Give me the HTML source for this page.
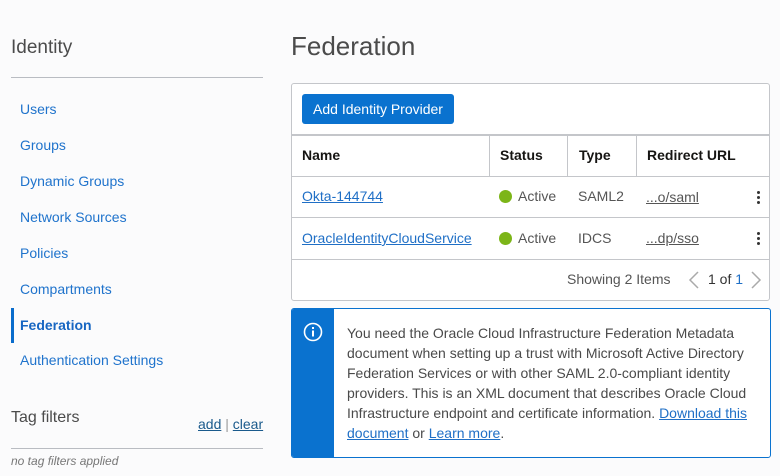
<!DOCTYPE html>
<html><head><style>
*{margin:0;padding:0;box-sizing:border-box}
body{width:780px;height:476px;background:#fbfbfc;font-family:"Liberation Sans",sans-serif;position:relative;overflow:hidden;color:#333}
.a{position:absolute;white-space:nowrap}
.nav{position:absolute;left:20px;font-size:14px;color:#1f73cc}
a{color:#1f6fc6;text-decoration:underline}
.th{position:absolute;font-weight:bold;font-size:14px;color:#161513;top:147px}
.vl{position:absolute;width:1px;background:#c4c6ca}
.hl{position:absolute;height:1px;background:#c4c6ca;left:292px;width:477px}
.dot{display:inline-block;width:13px;height:13px;border-radius:50%;background:#7cb518;vertical-align:-2px;margin-right:6px}
.k{position:absolute;left:757px;width:4px}
.k i{display:block;width:3px;height:3px;background:#333;border-radius:50%;margin-bottom:2px}
</style></head><body>
<div class="a" style="left:11px;top:37px;font-size:19px;color:#4b4b4b">Identity</div>
<div class="a" style="left:11px;top:77px;width:252px;height:1px;background:#b9bcc2"></div>
<div class="nav" style="top:101px">Users</div>
<div class="nav" style="top:137px">Groups</div>
<div class="nav" style="top:173px">Dynamic Groups</div>
<div class="nav" style="top:209px">Network Sources</div>
<div class="nav" style="top:245px">Policies</div>
<div class="nav" style="top:281px">Compartments</div>
<div class="a" style="left:11px;top:308px;width:3px;height:35px;background:#0a6ccc"></div>
<div class="nav" style="top:317px;font-weight:bold;color:#1766c2">Federation</div>
<div class="nav" style="top:352px">Authentication Settings</div>
<div class="a" style="left:11px;top:409px;font-size:16px;color:#4b4b4b">Tag filters</div>
<div class="a" style="left:198px;top:416px;font-size:14px;color:#9a9a9a"><a style="color:#1a5a8c">add</a> | <a style="color:#1a5a8c">clear</a></div>
<div class="a" style="left:11px;top:448px;width:252px;height:1px;background:#b9bcc2"></div>
<div class="a" style="left:11px;top:454px;font-size:12px;font-style:italic;color:#777">no tag filters applied</div>

<div class="a" style="left:291px;top:31px;font-size:26px;color:#4b4b4b">Federation</div>
<div class="a" style="left:291px;top:83px;width:479px;height:218px;border:1px solid #c4c6ca;border-radius:3px;background:#fff"></div>
<div class="a" style="left:302px;top:94px;width:152px;height:30px;background:#0a72cf;border-radius:3px;color:#fff;font-size:14px;line-height:30px;text-align:center">Add Identity Provider</div>
<div class="hl" style="top:134px;height:2px"></div>
<div class="hl" style="top:176px"></div>
<div class="hl" style="top:217px"></div>
<div class="hl" style="top:259px"></div>
<div class="vl" style="left:489px;top:135px;height:41px"></div>
<div class="vl" style="left:567px;top:135px;height:41px"></div>
<div class="vl" style="left:636px;top:135px;height:41px"></div>
<div class="th" style="left:302px">Name</div>
<div class="th" style="left:500px">Status</div>
<div class="th" style="left:579px">Type</div>
<div class="th" style="left:647px">Redirect URL</div>
<div class="a" style="left:302px;top:188px;font-size:14px"><a>Okta-144744</a></div>
<div class="a" style="left:499px;top:188px;font-size:14px;color:#555"><span class="dot"></span>Active</div>
<div class="a" style="left:578px;top:188px;font-size:14px;color:#555">SAML2</div>
<div class="a" style="left:646px;top:189px;font-size:14px"><a style="color:#555">...o/saml</a></div>
<div class="k" style="top:191px"><i></i><i></i><i></i></div>
<div class="a" style="left:302px;top:230px;font-size:14px"><a>OracleIdentityCloudService</a></div>
<div class="a" style="left:499px;top:230px;font-size:14px;color:#555"><span class="dot"></span>Active</div>
<div class="a" style="left:578px;top:230px;font-size:14px;color:#555">IDCS</div>
<div class="a" style="left:646px;top:230px;font-size:14px"><a style="color:#555">...dp/sso</a></div>
<div class="k" style="top:232px"><i></i><i></i><i></i></div>
<div class="a" style="left:567px;top:271px;font-size:14px;color:#555">Showing 2 Items</div>
<svg class="a" style="left:688px;top:271px" width="12" height="18"><path d="M10 1 L2 9 L10 17" fill="none" stroke="#aaa" stroke-width="1.5"/></svg>
<div class="a" style="left:708px;top:271px;font-size:14px;color:#333">1 of <span style="color:#1f6fc6">1</span></div>
<svg class="a" style="left:750px;top:271px" width="12" height="18"><path d="M2 1 L10 9 L2 17" fill="none" stroke="#aaa" stroke-width="1.5"/></svg>

<div class="a" style="left:291px;top:308px;width:480px;height:150px;border:1px solid #0a72cf;border-radius:3px;background:#fff;overflow:hidden">
<div style="position:absolute;left:0;top:0;width:42px;height:150px;background:#0a72cf"></div>
<svg style="position:absolute;left:11px;top:13px" width="20" height="20"><circle cx="10" cy="10" r="8.5" fill="none" stroke="#fff" stroke-width="1.6"/><rect x="9" y="8.5" width="2" height="6" fill="#fff"/><rect x="9" y="5" width="2" height="2" fill="#fff"/></svg>
<div style="position:absolute;left:55px;top:14px;font-size:14px;line-height:20px;color:#4a4a4a;white-space:normal;width:410px">You need the Oracle Cloud Infrastructure Federation Metadata document when setting up a trust with Microsoft Active Directory Federation Services or with other SAML 2.0-compliant identity providers. This is an XML document that describes Oracle Cloud Infrastructure endpoint and certificate information. <a>Download this document</a> or <a>Learn more</a>.</div>
</div>
</body></html>
